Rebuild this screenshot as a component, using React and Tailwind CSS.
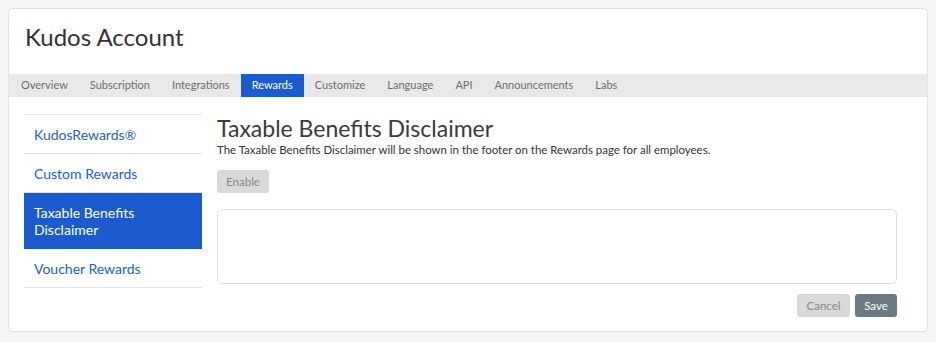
const tabs = [
    'Overview',
    'Subscription',
    'Integrations',
    'Rewards',
    'Customize',
    'Language',
    'API',
    'Announcements',
    'Labs',
];

const sideItems = ['KudosRewards®', 'Custom Rewards', 'Taxable Benefits Disclaimer', 'Voucher Rewards'];

export default function App() {
    return (
        <main
            className="min-h-screen bg-[#f6f6f6] p-2 text-[#333]"
            style={{ fontFamily: 'Lato, "Open Sans", sans-serif' }}
        >
            <div className="w-[920px] rounded-[5px] border border-[#e2e2e2] bg-white pb-[14px]">
                <h1 className="pl-4 pt-[13px] text-[24px] leading-[30px] text-[#333]">Kudos Account</h1>

                <nav className="mt-[22px] flex h-[23px] items-stretch bg-[#e9e9e9] pl-px text-[11px]">
                    {tabs.map((tab) => (
                        <span
                            key={tab}
                            className={
                                tab === 'Rewards'
                                    ? 'flex items-center bg-[#1c5bcd] px-[11px] text-white'
                                    : 'flex items-center px-[11px] text-[#6e6e6e]'
                            }
                        >
                            {tab}
                        </span>
                    ))}
                </nav>

                <section className="flex gap-[15px] pl-[15px] pr-[30px] pt-[17px]">
                    <ul className="w-[178px] shrink-0 border-t border-[#e3e3e3] text-[14px]">
                        {sideItems.map((item) => (
                            <li
                                key={item}
                                className={
                                    item === 'Taxable Benefits Disclaimer'
                                        ? 'border-b border-[#1c5bcd] bg-[#1c5bcd] pb-[10px] pl-[10px] pr-6 pt-[11px] leading-[17px] text-white'
                                        : 'border-b border-[#e3e3e3] pb-[10px] pl-[10px] pt-[11px] leading-[17px] text-[#2160cf]'
                                }
                            >
                                {item}
                            </li>
                        ))}
                    </ul>

                    <div className="flex-1">
                        <h2 className="text-[23px] leading-[28px] text-[#3a3a3a]">Taxable Benefits Disclaimer</h2>
                        <p className="text-[11.45px] leading-[15px] text-[#333]">
                            The Taxable Benefits Disclaimer will be shown in the footer on the Rewards page for all employees.
                        </p>

                        <button className="mt-[13px] flex h-[23px] w-[52px] items-center justify-center rounded-[3px] bg-[#d9d9d9] text-[11.5px] text-[#8a8a8a]">
                            Enable
                        </button>

                        <div className="mt-[16px] h-[75px] rounded-[5px] border border-[#e0e0e0] bg-white" />

                        <div className="mt-[10px] flex justify-end gap-[5px] text-[11.5px]">
                            <button className="flex h-[23px] w-[53px] items-center justify-center rounded-[3px] bg-[#d9d9d9] text-[#8a8a8a]">
                                Cancel
                            </button>
                            <button className="flex h-[23px] w-[42px] items-center justify-center rounded-[3px] bg-[#6b7a82] text-white">
                                Save
                            </button>
                        </div>
                    </div>
                </section>
            </div>
        </main>
    );
}
